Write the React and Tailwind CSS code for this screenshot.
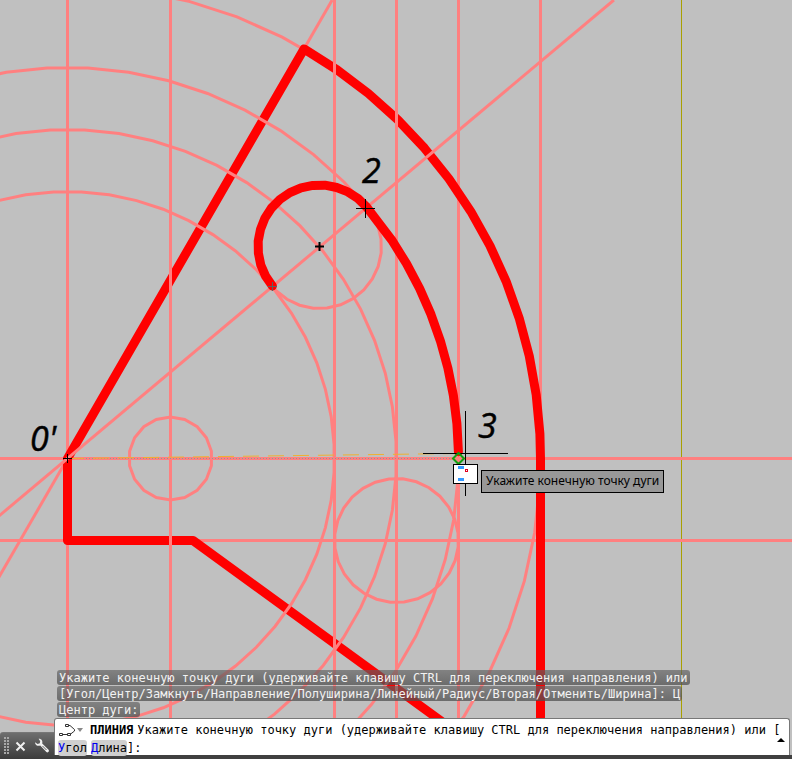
import React, { useState } from "react";

const O = [67.5, 458.5];
const PALE = "#ff8080";

const toXY = ([cx, cy], r, deg) => {
  const a = (deg * Math.PI) / 180;
  return `${(cx + r * Math.cos(a)).toFixed(1)},${(cy - r * Math.sin(a)).toFixed(1)}`;
};

const arc = (c, r, from, to, steps) =>
  Array.from({ length: steps + 1 }, (_, i) => toXY(c, r, from + ((to - from) * i) / steps)).join(" ");

// circles are faceted, the way CAD regenerates them at low resolution
const Circle = ({ c, r, n, phase = 0 }) => (
  <polygon points={arc(c, r, phase, phase + 360 - 360 / n, n - 1)} />
);

const outline = `${arc(O, 473, 60, 3, 12)} ${toXY(O, 473, 0)}`;
const slot = `${arc([319.5, 246.5], 61.5, 220, 40, 16)} ${arc(O, 391, 34, 1, 8)}`;

const Cross = ({ x, y, s, color = "#000", width = 1 }) => (
  <path d={`M${x - s} ${y}H${x + s + 1}M${x + 0.5} ${y - s - 0.5}V${y + s + 0.5}`} stroke={color} strokeWidth={width} />
);

const Drawing = () => (
  <svg className="absolute inset-0 h-full w-full" viewBox="0 0 792 759" preserveAspectRatio="xMinYMin slice" fill="none" role="img" aria-label="Чертёж">
    <path d="M681.5 0V759" stroke="#a8a000" />
    <g stroke={PALE} strokeWidth="3">
      <path d="M67.5 0V759M458.5 0V759M540.5 0V759M0 458.5H792M0 540.5H792" />
      <path d="M332.2 0L-20 610" />
      <Circle c={O} r={473} n={60} phase={3} />
    </g>
    <polyline points={`193,540.5 67.5,540.5 67.5,458.5 ${outline} 540.5,759`} stroke="#f00" strokeWidth="9" strokeLinejoin="round" />
    <path d="M193 540.5L540 793" stroke="#f00" strokeWidth="9" strokeLinecap="round" />
    <g stroke={PALE} strokeWidth="3">
      <path d="M170.5 0V759M334.5 0V759M396.5 0V759" />
      <path d="M613.9 0L-20 531.9" />
      <Circle c={O} r={391} n={60} phase={3} />
      <Circle c={O} r={329} n={60} phase={3} />
      <Circle c={O} r={267} n={60} phase={3} />
      <Circle c={[170.5, 458.5]} r={41.5} n={18} phase={10} />
      <Circle c={[319.5, 246.5]} r={62} n={28} phase={7} />
      <Circle c={[396.5, 540.5]} r={62} n={28} phase={7} />
    </g>
    <polyline points={slot} stroke="#f00" strokeWidth="9" strokeLinejoin="round" strokeLinecap="round" />

    {/* rubber band and tracking line */}
    <path d="M68 458.5H452" stroke="#8a9a9a" strokeDasharray="1 2" />
    <path d="M68 458.5L458 453.5" stroke="#f0b030" strokeDasharray="16 9" />

    <Cross x={365} y={208.5} s={9} />
    <Cross x={319} y={246.5} s={4} width={2} />
    <Cross x={272} y={286.5} s={4} color="#606060" />
    <Cross x={67} y={458.5} s={4} />

    <path d="M423 453.5H508M465.5 411V496" stroke="#000" />
    <path d="M458.5 453L464 458.5L458.5 464L453 458.5Z" stroke="#10a010" strokeWidth="2" />
    <rect x="453.5" y="464.5" width="24" height="19" fill="#fff" stroke="#000" />
    <path d="M458 466h6v3h-6zM458 478h6v3h-6z" fill="#3399ff" />
    <path d="M465 469h3v3h-3z" fill="#e00020" />
    <path d="M466 470h1v1h-1z" fill="#fff" />

    <g className="font-['Open_Sans',sans-serif] text-[34px] italic" fill="#000" stroke="#000" strokeWidth="0.5">
      <text x="362" y="183">2</text>
      <text x="478" y="438">3</text>
      <text x="30" y="451">0'</text>
    </g>
  </svg>
);

const history = [
  "Укажите конечную точку дуги (удерживайте клавишу CTRL для переключения направления) или",
  "[Угол/Центр/Замкнуть/Направление/Полуширина/Линейный/Радиус/Вторая/Отменить/Ширина]: Ц",
  "Центр дуги:",
];

const Option = ({ text }) => (
  <button type="button" className="h-4 rounded-[3px] bg-[#cfcfcf] leading-4">
    <span className="text-[#0000f0]">{text[0]}</span>{text.slice(1)}
  </button>
);

const CommandLine = () => {
  const [value, setValue] = useState("");
  return (
    <div className="flex items-end">
      <div className="flex h-[27px] w-[54px] shrink-0 items-center rounded-tl-[3px] border-t border-[#777] bg-gradient-to-b from-[#6e6e6e] to-[#3c3c3c]">
        <svg width="6" height="18" className="ml-1 shrink-0" fill="#a8a8a8" aria-hidden="true">
          {[0, 3, 6, 9, 12, 15].map(y => <path key={y} d={`M0 ${y}h2v2h-2zM3 ${y}h2v2h-2z`} />)}
        </svg>
        <button type="button" aria-label="Закрыть" className="ml-[5px]">
          <svg width="11" height="11" viewBox="0 0 11 11" stroke="#f0f0f0" strokeWidth="2"><path d="M1.5 1.5L9.5 9.5M9.5 1.5L1.5 9.5" /></svg>
        </button>
        <button type="button" aria-label="Настройка" className="ml-2">
          <svg width="16" height="16" viewBox="0 0 16 16" fill="#f0f0f0">
            <path d="M4.6 0.8C7.5 0.6 9 3 8.2 5.6L14.6 11.8C15.8 13.4 13.8 15.2 12.4 14L6.2 7.6C3.6 8.4 1 7 1 4.2L3.6 6L5.8 5.2L6.2 3.2Z" />
            <path d="M8.5 8L12.5 12" stroke="#666" />
          </svg>
        </button>
      </div>
      <div className="min-w-0 flex-1 border-b-4 border-[#404040] pr-0.5">
        <div className="flex h-[37px] rounded-t-[3px] border-t border-l border-r border-[#777] bg-white pl-[3px] pt-px text-black">
          <div className="min-w-0 flex-1 whitespace-nowrap">
            <div className="flex h-5 items-center">
              <button type="button" aria-label="Последние команды" className="mr-2 w-6 shrink-0">
                <svg width="25" height="14" viewBox="0 0 25 14" fill="none" stroke="#333">
                  <path d="M4 11.5H9M10 2.5H12L16.5 6.500V8L12 11.5" />
                  <path d="M1.5 10.5h3v2h-3zM9.5 10.5h3v2h-3zM7.5 1.5h3v2h-3z" fill="#fff" />
                  <path d="M19 5h6l-3 4z" fill="#888" stroke="none" />
                </svg>
              </button>
              <b className="mr-1">ПЛИНИЯ</b>
              <span>{history[0]} [</span>
            </div>
            <div className="flex h-4 items-center">
              <Option text="Угол" />
              <span className="w-1" />
              <Option text="Длина" />
              <label htmlFor="cmd">]:</label>
              <input id="cmd" value={value} onChange={e => setValue(e.target.value)} className="min-w-0 flex-1 outline-none" />
            </div>
          </div>
          <button type="button" aria-label="Журнал команд" className="w-3 shrink-0 pt-1">
            <svg width="8" height="4" viewBox="0 0 8 4"><path d="M4 0L8 4H0Z" fill="#000" /></svg>
          </button>
        </div>
      </div>
    </div>
  );
};

export default function App() {
  return (
    <main className="relative flex min-h-screen flex-col justify-end overflow-hidden bg-[#c0c0c0] font-['DejaVu_Sans_Mono',monospace] text-[12px] leading-[15px]">
      <Drawing />
      <div role="tooltip" className="absolute left-[481px] top-[470px] h-[23px] border border-black bg-[#989898] px-1 font-['Noto_Sans',sans-serif] leading-5 whitespace-nowrap text-black">
        Укажите конечную точку дуги
      </div>
      <div className="relative">
        <div className="ml-[57px] flex flex-col items-start gap-px pb-px">
          {history.map(line => (
            <p key={line} className="h-[15px] rounded-[3px] bg-gradient-to-b from-[#606060]/65 to-[#505050]/75 px-0.5 leading-[17px] whitespace-nowrap text-[#f2f2f2]">{line}</p>
          ))}
        </div>
        <CommandLine />
      </div>
    </main>
  );
}
